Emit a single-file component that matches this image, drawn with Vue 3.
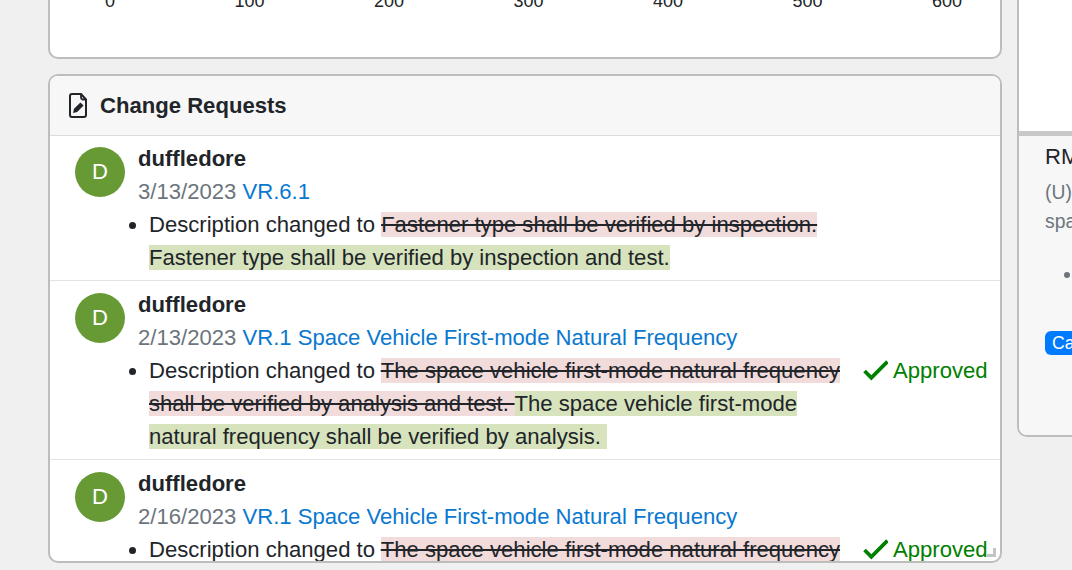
<script setup>
const axis = [0, 100, 200, 300, 400, 500, 600]
const del2 = 'The space vehicle first-mode natural frequency shall be verified by analysis and test. '
const ins2 = 'The space vehicle first-mode natural frequency shall be verified by analysis.\u00a0'
const vr1 = 'VR.1 Space Vehicle First-mode Natural Frequency'
const rows = [
  { date: '3/13/2023', link: 'VR.6.1', del: 'Fastener type shall be verified by inspection. ', ins: 'Fastener type shall be verified by inspection and test.', approved: false },
  { date: '2/13/2023', link: vr1, del: del2, ins: ins2, approved: true },
  { date: '2/16/2023', link: vr1, del: del2, ins: ins2, approved: true }
]
</script>

<template>
  <div class="page">
    <div class="left">
      <section class="chart-card">
        <div class="axis">
          <span v-for="n in axis" :key="n" class="tick">{{ n }}</span>
        </div>
      </section>
      <section class="cr-card">
        <header class="cr-head">
          <svg class="doc" viewBox="0 0 18 25" width="18" height="25">
            <path d="M3 1h9l5 5.5V22a2 2 0 0 1-2 2H3a2 2 0 0 1-2-2V3a2 2 0 0 1 2-2z" fill="none" stroke="#212529" stroke-width="2" stroke-linejoin="round"/>
            <path d="M12 1v3.5a2 2 0 0 0 2 2h3" fill="none" stroke="#212529" stroke-width="1.8"/>
            <path d="M4 20l1-4.2 6.4-6.4 3.2 3.2-6.4 6.4z" fill="#212529"/>
          </svg>
          <h2>Change Requests</h2>
        </header>
        <div class="list">
          <article v-for="(r, i) in rows" :key="i" class="row">
            <div class="avatar">D</div>
            <div class="body">
              <div class="name">duffledore</div>
              <div class="meta"><span class="date">{{ r.date }}</span> <a class="link">{{ r.link }}</a></div>
              <div class="change">
                <ul><li>Description changed to <del>{{ r.del }}</del><ins>{{ r.ins }}</ins></li></ul>
                <div v-if="r.approved" class="approved">
                  <svg viewBox="0 0 24 24" width="25" height="25"><path d="M1.5 12.5L8 19L23.5 3.5" fill="none" stroke="#008000" stroke-width="3.6"/></svg>
                  <span>Approved</span>
                </div>
              </div>
            </div>
          </article>
        </div>
        <span class="grip"></span>
      </section>
    </div>
    <aside class="right">
      <div class="blank"></div>
      <div class="detail">
        <div class="title">RMS Acceleration</div>
        <p class="sub">(U) Random vibration of the<br>space vehicle</p>
        <ul class="bul"><li>Item</li></ul>
        <span class="badge">Category</span>
      </div>
    </aside>
  </div>
</template>

<style scoped>
.page {
  width: 1072px;
  height: 570px;
  overflow: hidden;
  background: #f0f0f0;
  display: flex;
  align-items: flex-start;
  padding-left: 48px;
  box-sizing: border-box;
  font-family: "Liberation Sans", Arial, sans-serif;
  font-size: 22.1px;
  line-height: 33px;
  color: #212529;
}
.left { width: 954px; flex: none; display: flex; flex-direction: column; gap: 15px; }
.chart-card {
  height: 59px;
  box-sizing: border-box;
  background: #fff;
  border: 2px solid #bdbdbd;
  border-top: 0;
  border-radius: 0 0 10px 10px;
  overflow: hidden;
}
.axis { display: flex; margin: -10px 0 0 -9.8px; font-size: 18px; line-height: 22px; color: #212529; }
.tick { width: 139.5px; flex: none; text-align: center; }
.cr-card {
  position: relative;
  height: 489px;
  box-sizing: border-box;
  background: #fff;
  border: 2px solid #bdbdbd;
  border-radius: 10px;
  overflow: hidden;
}
.cr-head {
  height: 60px;
  box-sizing: border-box;
  display: flex;
  align-items: center;
  gap: 13px;
  padding: 0 0 0 19px;
  background: #f7f7f7;
  border-bottom: 1px solid #dcdcdc;
}
.doc { flex: none; }
h2 { margin: 0; font-size: 22.1px; font-weight: 700; }
.list { margin-top: -0.8px; }
.row { display: flex; gap: 13px; padding: 6.5px 12px 6.5px 25px; border-bottom: 1px solid #e3e3e3; }
.avatar {
  width: 50px;
  height: 50px;
  margin-top: 5px;
  border-radius: 50%;
  background: #679a35;
  color: #fff;
  display: flex;
  align-items: center;
  justify-content: center;
  flex: none;
}
.body { flex: 1; min-width: 0; }
.name { font-weight: 700; }
.date { color: #6c757d; }
.link { color: #0a78cf; }
.change { display: flex; align-items: flex-start; }
ul { margin: 0; padding: 0 0 0 11px; width: 696px; flex: none; box-sizing: content-box; color: #212529; }
del { background: #f2dbdb; text-decoration: line-through; }
ins { background: #d6e3bc; text-decoration: none; }
.approved { flex: none; margin-left: 18px; display: flex; align-items: center; gap: 5px; color: #008000; height: 33px; }
.approved svg { flex: none; }
.grip { position: absolute; right: 4px; bottom: 4px; width: 9px; height: 9px; border-right: 3px solid #c4c4c4; border-bottom: 3px solid #c4c4c4; box-sizing: border-box; }
.right { margin-left: 15px; flex: none; width: 60px; height: 437px; display: flex; flex-direction: column; border-left: 2px solid #bdbdbd; border-bottom: 2px solid #bdbdbd; border-bottom-left-radius: 10px; box-sizing: border-box; overflow: hidden; }
.blank { height: 131px; flex: none; background: #fff; }
.detail { flex: 1; background: #f7f7f7; border-top: 5px solid #c8c8c8; padding: 4px 0 0 26px; white-space: nowrap; }
.title { height: 33px; color: #212529; }
.sub { margin: 5px 0 0; width: 300px; white-space: normal; font-size: 19.34px; line-height: 29px; color: #6c757d; }
.bul { padding: 24px 0 0 38px; width: 200px; font-size: 19.34px; line-height: 29px; color: #6c757d; }
.badge { display: inline-block; margin-top: 42px; padding: 0 7px; background: #007bff; color: #fff; border-radius: 6px; font-size: 17.6px; line-height: 24px; }
</style>
